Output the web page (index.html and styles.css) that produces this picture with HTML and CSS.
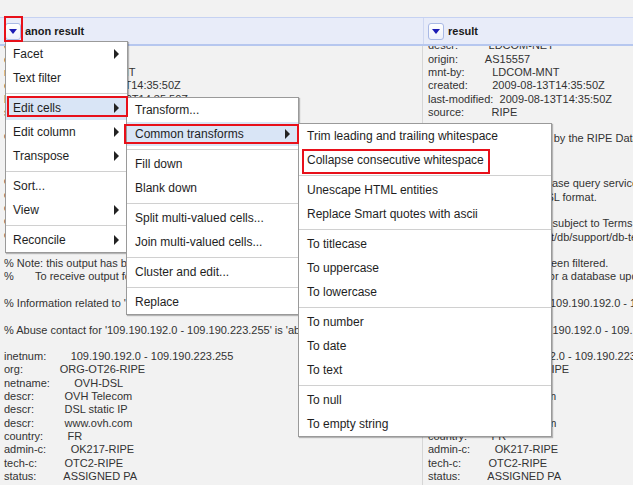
FILE: index.html
```html
<!DOCTYPE html>
<html>
<head>
<meta charset="utf-8">
<link rel="stylesheet" href="styles.css">
</head>
<body>
<div class="topbar"></div>
<div class="head">
  <div class="hcell c1"><span class="dd"></span><span>anon result</span></div>
  <div class="hcell c2"><span class="dd"></span><span>result</span></div>
</div>
<div class="viewport">
  <div class="rows">
    <div class="row first">
<pre class="cell c1">descr:          LDCOM-NET
origin:         AS15557
mnt-by:         LDCOM-MNT
created:        2009-08-13T14:35:50Z
last-modified:  2009-08-13T14:35:50Z
source:         RIPE

% This query was served by the RIPE Database Query Service version 1.88 (HEREFORD)</pre>
<pre class="cell c2">descr:          LDCOM-NET
origin:         AS15557
mnt-by:         LDCOM-MNT
created:        2009-08-13T14:35:50Z
last-modified:  2009-08-13T14:35:50Z
source:         RIPE

% This query was served by the RIPE Database Query Service version 1.88 (HEREFORD)</pre>
    </div>
    <div class="row">
<pre class="cell c1">% This is the RIPE Database query service.
% The objects are in RPSL format.
%
% The RIPE Database is subject to Terms and Conditions.
% See http://www.ripe.net/db/support/db-terms-conditions.pdf

% Note: this output has been filtered.
%       To receive output for a database update, use the "-B" flag.

% Information related to '109.190.192.0 - 109.190.223.255'

% Abuse contact for '109.190.192.0 - 109.190.223.255' is 'abuse@ovh.net'

inetnum:        109.190.192.0 - 109.190.223.255
org:            ORG-OT26-RIPE
netname:        OVH-DSL
descr:          OVH Telecom
descr:          DSL static IP
descr:          www.ovh.com
country:        FR
admin-c:        OK217-RIPE
tech-c:         OTC2-RIPE
status:         ASSIGNED PA
mnt-by:         OVH-MNT
mnt-lower:      OVH-MNT</pre>
<pre class="cell c2">% This is the RIPE Database query service.
% The objects are in RPSL format.
%
% The RIPE Database is subject to Terms and Conditions.
% See http://www.ripe.net/db/support/db-terms-conditions.pdf

% Note: this output has been filtered.
%       To receive output for a database update, use the "-B" flag.

% Information related to '109.190.192.0 - 109.190.223.255'

% Abuse contact for '109.190.192.0 - 109.190.223.255' is 'abuse@ovh.net'

inetnum:        109.190.192.0 - 109.190.223.255
org:            ORG-OT26-RIPE
netname:        OVH-DSL
descr:          OVH Telecom
descr:          DSL static IP
descr:          www.ovh.com
country:        FR
admin-c:        OK217-RIPE
tech-c:         OTC2-RIPE
status:         ASSIGNED PA
mnt-by:         OVH-MNT
mnt-lower:      OVH-MNT</pre>
    </div>
  </div>
</div>

<div class="menu m1">
  <div class="mi">Facet<span class="arr"></span></div>
  <div class="mi">Text filter</div>
  <div class="sep"></div>
  <div class="mi on">Edit cells<span class="arr"></span></div>
  <div class="mi">Edit column<span class="arr"></span></div>
  <div class="mi">Transpose<span class="arr"></span></div>
  <div class="sep"></div>
  <div class="mi">Sort...</div>
  <div class="mi">View<span class="arr"></span></div>
  <div class="sep"></div>
  <div class="mi">Reconcile<span class="arr"></span></div>
</div>

<div class="menu m2">
  <div class="mi">Transform...</div>
  <div class="mi on">Common transforms<span class="arr"></span></div>
  <div class="sep"></div>
  <div class="mi">Fill down</div>
  <div class="mi">Blank down</div>
  <div class="sep"></div>
  <div class="mi">Split multi-valued cells...</div>
  <div class="mi">Join multi-valued cells...</div>
  <div class="sep"></div>
  <div class="mi">Cluster and edit...</div>
  <div class="sep"></div>
  <div class="mi">Replace</div>
</div>

<div class="menu m3">
  <div class="mi">Trim leading and trailing whitespace</div>
  <div class="mi">Collapse consecutive whitespace</div>
  <div class="sep"></div>
  <div class="mi">Unescape HTML entities</div>
  <div class="mi">Replace Smart quotes with ascii</div>
  <div class="sep"></div>
  <div class="mi">To titlecase</div>
  <div class="mi">To uppercase</div>
  <div class="mi">To lowercase</div>
  <div class="sep"></div>
  <div class="mi">To number</div>
  <div class="mi">To date</div>
  <div class="mi">To text</div>
  <div class="sep"></div>
  <div class="mi">To null</div>
  <div class="mi">To empty string</div>
</div>

<div class="hl hl-btn"></div>
<div class="hl hl-edit"></div>
<div class="hl hl-common"></div>
<div class="hl hl-collapse"></div>
</body>
</html>
```
FILE: styles.css
```css
* { box-sizing: border-box; }
html, body { margin: 0; padding: 0; }
body {
  width: 633px;
  height: 485px;
  overflow: hidden;
  position: relative;
  background: #f2f2f2;
  font-family: "Liberation Sans", Arial, sans-serif;
}
.topbar { height: 17px; }

.head {
  display: flex;
  height: 29px;
  background: #e8ecf9;
  border-top: 1px solid #c6d2f2;
  border-bottom: 2px solid #b6c7ef;
}
.hcell {
  display: flex;
  align-items: center;
  gap: 4px;
  font-weight: bold;
  font-size: 11px;
  color: #1a1a1a;
}
.hcell.c1 { width: 423px; padding-left: 5px; }
.hcell.c2 { flex: 1; border-left: 1px solid #cfd8f2; padding-left: 4px; }

.dd {
  width: 16px;
  height: 17px;
  border: 1px solid #a9b9e5;
  border-radius: 3px;
  background: linear-gradient(#ffffff, #eef1fb);
  display: flex;
  align-items: center;
  justify-content: center;
}
.dd::after {
  content: "";
  width: 0;
  height: 0;
  border-left: 4px solid transparent;
  border-right: 4px solid transparent;
  border-top: 5px solid #1c1cb4;
}

.viewport { height: 439px; overflow: hidden; }
.rows { margin-top: -6.65px; }
.row { display: flex; }
.cell {
  margin: 0;
  font-family: "Liberation Sans", Arial, sans-serif;
  font-size: 11px;
  line-height: 13.3px;
  color: #333;
  white-space: pre;
  overflow: hidden;
}
.cell.c1 { width: 422px; padding-left: 4px; }
.cell.c2 { flex: 1; border-left: 1px solid #d6d6d6; padding-left: 5px; }
.row.first .cell { padding-bottom: 31.6px; }

.menu {
  position: absolute;
  background: #fff;
  border: 1px solid #9a9a9a;
  box-shadow: 1px 1px 1px rgba(0, 0, 0, 0.25);
  font-size: 12px;
  color: #1e1e1e;
}
.m1 { left: 5px; top: 41px; width: 123px; }
.m2 { left: 126px; top: 97px; width: 173px; }
.m3 { left: 298px; top: 123px; width: 254px; }

.mi {
  height: 24px;
  display: flex;
  align-items: center;
  justify-content: space-between;
  padding: 0 8px 0 8px;
  white-space: nowrap;
}
.m1 .mi { padding-left: 7px; }
.mi.on { background: #d9e5f6; }
.arr {
  width: 0;
  height: 0;
  border-left: 5px solid #222;
  border-top: 5px solid transparent;
  border-bottom: 5px solid transparent;
}
.sep {
  margin: 3px 0 2px;
  border-top: 1px solid #d0d0d0;
}

.hl { position: absolute; border: 2px solid #e8101a; }
.hl-btn { left: 4px; top: 16px; width: 19px; height: 26px; }
.hl-edit { left: 7px; top: 96px; width: 121px; height: 21px; }
.hl-common { left: 124px; top: 124px; width: 175px; height: 20px; }
.hl-collapse { left: 302px; top: 149px; width: 188px; height: 25px; }
```
